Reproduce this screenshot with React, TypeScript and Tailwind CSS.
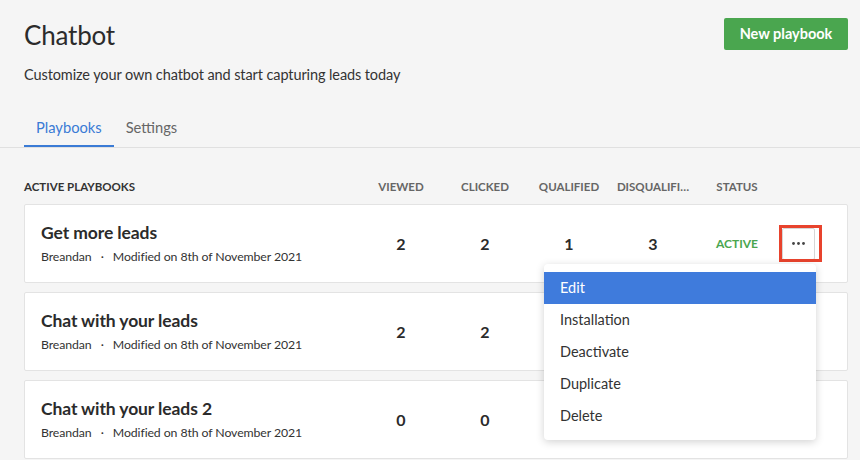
import React from "react";

const rows = [
  { title: "Get more leads", v: 2, c: 2, q: 1, d: 3, menu: true },
  { title: "Chat with your leads", v: 2, c: 2, q: 1, d: 3, menu: false },
  { title: "Chat with your leads 2", v: 0, c: 0, q: 0, d: 0, menu: false },
];

function Dots() {
  return (
    <svg width="13" height="3" viewBox="0 0 13 3">
      <circle cx="1.5" cy="1.5" r="1.4" fill="#444" />
      <circle cx="6.5" cy="1.5" r="1.4" fill="#444" />
      <circle cx="11.5" cy="1.5" r="1.4" fill="#444" />
    </svg>
  );
}

function Menu() {
  const items = ["Installation", "Deactivate", "Duplicate", "Delete"];
  return (
    <div className="absolute right-[-1px] top-[calc(100%+4px)] z-20 w-[272px] rounded-[4px] bg-white py-2 shadow-[0_2px_8px_rgba(0,0,0,0.18)]">
      <div className="flex h-8 items-center bg-[#3f7bdc] px-4 text-[14.5px] text-white">Edit</div>
      {items.map((it) => (
        <div key={it} className="flex h-8 items-center px-4 text-[14.5px] text-[#333]">
          {it}
        </div>
      ))}
    </div>
  );
}

export default function App() {
  return (
    <div className="min-h-[460px] w-[860px] overflow-hidden bg-[#f5f5f5] font-['Lato',sans-serif] text-[#2b2b2b]">
      <div className="pl-6 pr-3">
        <div className="flex items-start justify-between pt-[18px]">
          <h1 className="text-[26px] leading-[34px] font-normal tracking-[-0.2px] text-[#2b2b2b]">Chatbot</h1>
          <button className="h-8 w-[124px] rounded-[2px] bg-[#4aa64f] text-[14.5px] font-bold text-white">
            New playbook
          </button>
        </div>
        <p className="mt-[13px] text-[14.5px] leading-5 tracking-[-0.1px] text-[#333]">
          Customize your own chatbot and start capturing leads today
        </p>
        <div className="mt-[32px] flex">
          <div className="border-b-2 border-[#3a7bd5] px-3 pb-[8px] text-[14.7px] leading-5 text-[#3a7bd5]">Playbooks</div>
          <div className="px-3 pb-[8px] text-[14.7px] leading-5 text-[#666]">Settings</div>
        </div>
      </div>
      <div className="border-t border-[#e0e0e0]" />
      <div className="pl-6 pr-3">
        <div className="grid grid-cols-[335px_84px_84px_84px_84px_84px_1fr] items-center pt-[31px] pb-[9px] text-[11.5px] font-bold leading-4 text-[#666]">
          <div className="text-[#333]">ACTIVE PLAYBOOKS</div>
          <div className="text-center">VIEWED</div>
          <div className="text-center">CLICKED</div>
          <div className="text-center">QUALIFIED</div>
          <div className="text-center">DISQUALIFI…</div>
          <div className="text-center">STATUS</div>
          <div />
        </div>
        <div className="flex flex-col gap-[9px]">
          {rows.map((r) => (
            <div
              key={r.title}
              className="grid grid-cols-[318px_84px_84px_84px_84px_84px_1fr] items-center rounded-[2px] border border-[#e3e3e3] bg-white py-4 pl-4"
            >
              <div>
                <div className="text-[17.5px] leading-6 font-bold tracking-[-0.1px] text-[#2b2b2b]">{r.title}</div>
                <div className="mt-[3px] text-[12.3px] leading-[18px] tracking-[-0.1px] text-[#333]">
                  Breandan <span className="mx-[6px]">·</span> Modified on 8th of November 2021
                </div>
              </div>
              <div className="text-center text-[16px] font-bold">{r.v}</div>
              <div className="text-center text-[16px] font-bold">{r.c}</div>
              <div className="text-center text-[16px] font-bold">{r.q}</div>
              <div className="text-center text-[16px] font-bold">{r.d}</div>
              <div className="text-center text-[12px] font-bold text-[#4aa64f]">ACTIVE</div>
              <div className="pl-[3px]">
                {r.menu && (
                  <div className="relative w-[33px]">
                    <button className="flex h-8 w-[33px] items-center justify-center rounded-[2px] border border-[#d6d6d6] bg-white">
                      <Dots />
                    </button>
                    <div className="pointer-events-none absolute -top-[3px] -left-[3px] -right-[7px] -bottom-[2px] border-[3px] border-[#e8432d]" />
                    <Menu />
                  </div>
                )}
              </div>
            </div>
          ))}
        </div>
      </div>
    </div>
  );
}
